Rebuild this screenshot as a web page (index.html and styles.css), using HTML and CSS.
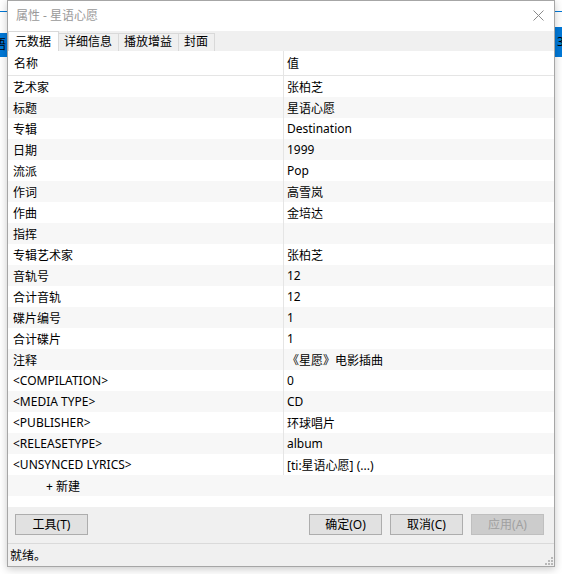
FILE: index.html
```html
<!DOCTYPE html>
<html lang="zh-CN">
<head>
<meta charset="utf-8">
<title>属性 - 星语心愿</title>
<link rel="stylesheet" href="styles.css">
</head>
<body>
<div class="desk">
  <div class="bg-line bg-line-l"></div>
  <div class="bg-line bg-line-r"></div>
  <div class="bg-sel bg-sel-l">语</div>
  <div class="bg-sel bg-sel-r">3</div>

  <div class="win">
    <div class="titlebar">
      <span class="title">属性 - 星语心愿</span>
      <svg class="close" width="11" height="11" viewBox="0 0 11 11"><path d="M0.5 0.5 L10.5 10.5 M10.5 0.5 L0.5 10.5" stroke="#8a8a8a" stroke-width="1"/></svg>
    </div>

    <div class="tabs">
      <span class="tab active">元数据</span>
      <span class="tab">详细信息</span>
      <span class="tab">播放增益</span>
      <span class="tab">封面</span>
    </div>

    <div class="list">
      <div class="row head"><span class="k">名称</span><span class="v">值</span></div>
      <div class="row"><span class="k">艺术家</span><span class="v">张柏芝</span></div>
      <div class="row"><span class="k">标题</span><span class="v">星语心愿</span></div>
      <div class="row"><span class="k">专辑</span><span class="v">Destination</span></div>
      <div class="row"><span class="k">日期</span><span class="v">1999</span></div>
      <div class="row"><span class="k">流派</span><span class="v">Pop</span></div>
      <div class="row"><span class="k">作词</span><span class="v">高雪岚</span></div>
      <div class="row"><span class="k">作曲</span><span class="v">金培达</span></div>
      <div class="row"><span class="k">指挥</span><span class="v"></span></div>
      <div class="row"><span class="k">专辑艺术家</span><span class="v">张柏芝</span></div>
      <div class="row"><span class="k">音轨号</span><span class="v">12</span></div>
      <div class="row"><span class="k">合计音轨</span><span class="v">12</span></div>
      <div class="row"><span class="k">碟片编号</span><span class="v">1</span></div>
      <div class="row"><span class="k">合计碟片</span><span class="v">1</span></div>
      <div class="row"><span class="k">注释</span><span class="v">《星愿》电影插曲</span></div>
      <div class="row"><span class="k">&lt;COMPILATION&gt;</span><span class="v">0</span></div>
      <div class="row"><span class="k">&lt;MEDIA TYPE&gt;</span><span class="v">CD</span></div>
      <div class="row"><span class="k">&lt;PUBLISHER&gt;</span><span class="v">环球唱片</span></div>
      <div class="row"><span class="k">&lt;RELEASETYPE&gt;</span><span class="v">album</span></div>
      <div class="row"><span class="k">&lt;UNSYNCED LYRICS&gt;</span><span class="v">[ti:星语心愿] (...)</span></div>
      <div class="row add"><span class="k">+ 新建</span></div>
    </div>

    <div class="buttons">
      <button class="btn">工具(T)</button>
      <span class="spacer"></span>
      <button class="btn">确定(O)</button>
      <button class="btn">取消(C)</button>
      <button class="btn off">应用(A)</button>
    </div>

    <div class="status">
      <span>就绪。</span>
      <svg class="grip" width="9" height="9" viewBox="0 0 9 9">
        <rect x="7" y="1" width="2" height="2" fill="#b8b8b8"/>
        <rect x="4" y="4" width="2" height="2" fill="#b8b8b8"/>
        <rect x="7" y="4" width="2" height="2" fill="#b8b8b8"/>
        <rect x="1" y="7" width="2" height="2" fill="#b8b8b8"/>
        <rect x="4" y="7" width="2" height="2" fill="#b8b8b8"/>
        <rect x="7" y="7" width="2" height="2" fill="#b8b8b8"/>
      </svg>
    </div>
  </div>
</div>
</body>
</html>
```

FILE: styles.css
```css
* { box-sizing: border-box; }
body { margin: 0; background: #fff; font-family: "Noto Sans", "Noto Sans CJK SC", sans-serif; font-size: 12px; color: #000; }

.desk { position: relative; width: 562px; height: 574px; overflow: hidden; background: #fff; }
.bg-line { position: absolute; top: 11px; height: 1px; background: #0078d7; }
.bg-line-l { left: 0; width: 8px; }
.bg-line-r { left: 554px; width: 8px; }
.bg-sel { position: absolute; background: #0078d7; color: #000; line-height: 24px; overflow: hidden; }
.bg-sel-l { left: 0; top: 33px; width: 8px; height: 24px; text-indent: -6px; }
.bg-sel-r { left: 554px; top: 27px; width: 8px; height: 30px; line-height: 30px; padding-left: 3px; }

.win {
  position: absolute; left: 7px; top: 0; width: 548px; height: 567px;
  background: #f0f0f0; border: 1px solid #a6a6a6;
  box-shadow: 0 2px 8px rgba(0, 0, 0, 0.22);
  display: flex; flex-direction: column;
}

.titlebar { height: 30px; background: #fff; display: flex; align-items: center; padding: 0 0 3px 8px; }
.title { color: #999; flex: 1; }
.close { margin-right: 10px; margin-top: 2px; }

.tabs { height: 20px; background: #f0f0f0; display: flex; align-items: flex-end; }
.tab {
  height: 18px; line-height: 16px; padding: 0 6px 0 5px;
  border: 1px solid #d9d9d9; border-bottom: none; border-left: none;
  background: #f0f0f0;
}
.tab.active { height: 20px; line-height: 20px; background: #fff; border-left: 1px solid #d9d9d9; padding: 0 6px; width: 51px; }

.list { background: #fff; height: 456px; }
.row { height: 21px; display: flex; align-items: center; }
.row:nth-child(odd) { background: #f7f7f7; }
.row .k { width: 275px; padding-left: 5px; white-space: pre; }
.row .v { align-self: stretch; display: flex; align-items: center; border-left: 1px solid #e5e5e5; padding-left: 3px; flex: 1; }
.row.head { height: 25px; background: #fff; border-bottom: 1px solid #e5e5e5; }
.row.head .k { padding-left: 6px; }
.row.add .k { padding-left: 38px; }

.buttons { height: 37px; display: flex; align-items: center; padding: 0 10px 2px 7px; gap: 8px; border-bottom: 1px solid #dadada; }
.spacer { flex: 1; }
.btn {
  width: 73px; height: 21px; padding: 0;
  font: inherit; color: #000;
  background: #e1e1e1; border: 1px solid #adadad;
}
.btn.off { background: #ccc; border-color: #bfbfbf; color: #a0a0a0; }

.status { flex: 1; display: flex; align-items: center; justify-content: space-between; padding: 0 0 0 2px; position: relative; }
.grip { position: absolute; right: 1px; bottom: 1px; }
```
